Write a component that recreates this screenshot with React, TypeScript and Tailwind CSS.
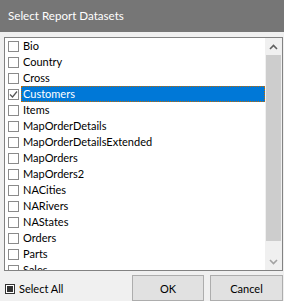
import React from "react";

const items = [
  "Bio",
  "Country",
  "Cross",
  "Customers",
  "Items",
  "MapOrderDetails",
  "MapOrderDetailsExtended",
  "MapOrders",
  "MapOrders2",
  "NACities",
  "NARivers",
  "NAStates",
  "Orders",
  "Parts",
  "Sales",
];

function Box({ checked }: { checked?: boolean }) {
  return (
    <div className="w-[11px] h-[11px] border border-[#8a8a8a] bg-white flex items-center justify-center shrink-0">
      {checked && (
        <svg width="9" height="9" viewBox="0 0 9 9">
          <path d="M1 4.5 L3.5 7 L8 1.5" fill="none" stroke="#555" strokeWidth="1.2" />
        </svg>
      )}
    </div>
  );
}

export default function App() {
  return (
    <div
      className="w-[284px] h-[301px] bg-[#f0f0f0] flex flex-col overflow-hidden text-[11px] leading-[16px] text-black"
      style={{ fontFamily: 'Lato, "Liberation Sans", Arial, sans-serif' }}
    >
      <div className="h-[32px] bg-[#767676] text-white text-[11.6px] flex items-center pl-[8px] shrink-0">
        Select Report Datasets
      </div>
      <div className="ml-[4px] mt-[5px] w-[279px] h-[234px] border border-[#828282] bg-white flex shrink-0">
        <div className="flex-1 overflow-hidden flex flex-col">
          {items.map((name) => {
            const sel = name === "Customers";
            return (
              <div key={name} className="h-[16px] flex items-center shrink-0">
                <div className="w-[16px] flex justify-end pr-[2px] shrink-0">
                  <Box checked={sel} />
                </div>
                <div
                  className={
                    sel
                      ? "h-[16px] flex-1 flex items-center pl-[1px] bg-[#0078d7] text-white border border-dotted border-[#c06a00]"
                      : "h-[16px] flex-1 flex items-center pl-[2px]"
                  }
                >
                  {name}
                </div>
              </div>
            );
          })}
        </div>
        <div className="w-[17px] bg-[#f0f0f0] flex flex-col shrink-0">
          <div className="h-[17px] flex items-center justify-center shrink-0">
            <svg width="9" height="6" viewBox="0 0 9 6">
              <path d="M1 5 L4.5 1.5 L8 5" fill="none" stroke="#606060" strokeWidth="1.6" />
            </svg>
          </div>
          <div className="mx-[1px] h-[186px] bg-[#cdcdcd] shrink-0" />
          <div className="flex-1" />
          <div className="h-[17px] flex items-center justify-center shrink-0">
            <svg width="9" height="6" viewBox="0 0 9 6">
              <path d="M1 1 L4.5 4.5 L8 1" fill="none" stroke="#a3a3a3" strokeWidth="1.6" />
            </svg>
          </div>
        </div>
      </div>
      <div className="flex items-start mt-[4px]">
        <div className="flex items-center ml-[5px] mt-[6px] w-[125px]">
          <div className="w-[10px] h-[10px] border border-[#333] bg-white flex items-center justify-center shrink-0">
            <div className="w-[6px] h-[6px] bg-[#333]" />
          </div>
          <span className="ml-[4px]">Select All</span>
        </div>
        <div className="ml-[2px] w-[72px] h-[26px] bg-[#e1e1e1] border border-[#adadad] flex items-start justify-center pt-[5px]">
          OK
        </div>
        <div className="ml-[6px] w-[73px] h-[26px] bg-[#e1e1e1] border border-[#adadad] flex items-start justify-center pt-[5px]">
          Cancel
        </div>
      </div>
    </div>
  );
}
